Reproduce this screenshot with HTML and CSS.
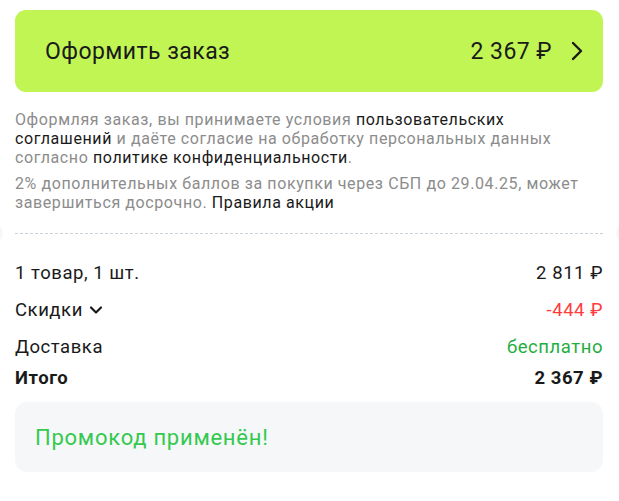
FILE: index.html
```html
<!DOCTYPE html>
<html lang="ru">
<head>
<meta charset="utf-8">
<link rel="stylesheet" href="styles.css">
</head>
<body>
<div class="page">
  <button class="checkout">
    <span class="checkout-label">Оформить заказ</span>
    <span class="checkout-right">
      <span class="checkout-price">2 367 ₽</span>
      <svg class="chev-right" width="12" height="20" viewBox="0 0 12 20"><path d="M2 2 L10 10 L2 18" fill="none" stroke="#1a1a1a" stroke-width="2.4" stroke-linecap="round" stroke-linejoin="round"/></svg>
    </span>
  </button>
  <div class="legal">
    <p>Оформляя заказ, вы принимаете условия <a>пользовательских соглашений</a> и даёте согласие на обработку персональных данных согласно <a>политике конфиденциальности</a>.</p>
    <p>2% дополнительных баллов за покупки через СБП до 29.04.25, может завершиться досрочно. <a>Правила акции</a></p>
  </div>
  <div class="divider"></div>
  <div class="summary">
    <div class="row"><span>1 товар, 1 шт.</span><span>2 811 ₽</span></div>
    <div class="row"><span class="disc">Скидки <svg class="chev-down" width="14" height="10" viewBox="0 0 14 10"><path d="M2 2.5 L7 7.5 L12 2.5" fill="none" stroke="#1a1a1a" stroke-width="2.2" stroke-linecap="round" stroke-linejoin="round"/></svg></span><span class="red">-444 ₽</span></div>
    <div class="row"><span>Доставка</span><span class="green">бесплатно</span></div>
    <div class="row total"><span>Итого</span><span>2 367 ₽</span></div>
  </div>
  <div class="promo">Промокод применён!</div>
</div>
</body>
</html>
```
FILE: styles.css
```css
* { box-sizing: border-box; }
html, body { margin: 0; padding: 0; background: #fff; }
body { font-family: Roboto, "Noto Sans", Arial, sans-serif; color: #1a1a1a; }
.page { padding: 10px 16px 0 15px; position: relative; }
.checkout {
  width: 100%; height: 82px; border: 0; border-radius: 11px;
  background: #c1f553; display: flex; align-items: center; justify-content: space-between;
  padding: 0 20px 0 30px; font-family: inherit; color: #1a1a1a; font-size: 23px; letter-spacing: 0.45px;
}
.checkout-right { display: flex; align-items: center; gap: 19px; }
.chev-right { display: block; }
.legal { padding-top: 18px; font-size: 16px; line-height: 19px; letter-spacing: 0.6px; color: #8c8c8c; }
.legal p { margin: 0 0 7px; }
.legal p:last-child { margin-bottom: 0; }
.legal a { color: #1a1a1a; }
.divider { margin-top: 21px; height: 1px; border-top: 1px dashed #c8d0d8; position: relative; }
.divider::before, .divider::after {
  content: ""; position: absolute; top: -11px; width: 20px; height: 20px; border-radius: 50%; background: #f6f7f8;
}
.divider::before { left: -32px; }
.divider::after { right: -33px; }
.summary { padding-top: 20px; }
.row { display: flex; justify-content: space-between; align-items: center; font-size: 18.5px; letter-spacing: 0.55px; height: 37px; }
.row.total { font-weight: 700; height: 26px; }
.disc { display: flex; align-items: center; gap: 6px; }
.red { color: #ff3b3b; }
.green { color: #1fae3f; }
.promo {
  margin-top: 11px; height: 70px; border-radius: 12px; background: #f6f7f9;
  display: flex; align-items: center; padding-left: 20px; font-size: 22px; letter-spacing: 0.75px; color: #33c94f;
}
```
